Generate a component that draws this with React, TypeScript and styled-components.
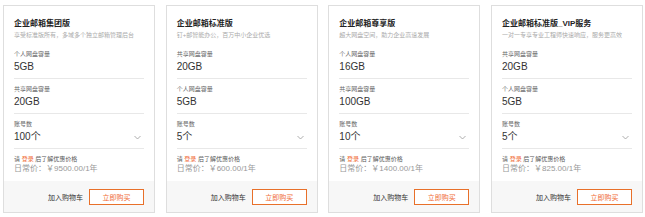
import styled, { createGlobalStyle } from "styled-components";

const GlobalStyle = createGlobalStyle`
  body {
    margin: 0;
    background: #fff;
    font-family: "Liberation Sans", "Noto Sans CJK SC", sans-serif;
  }
`;

type Spec = { label: string; value: string };

type Plan = {
  title: string;
  desc: string;
  specs: Spec[];
  accounts: string;
  price: string;
};

const plans: Plan[] = [
  {
    title: "企业邮箱集团版",
    desc: "享受标准版所有，多域多个独立邮箱管理后台",
    specs: [
      { label: "个人网盘容量", value: "5GB" },
      { label: "共享网盘容量", value: "20GB" },
    ],
    accounts: "100个",
    price: "9500.00",
  },
  {
    title: "企业邮箱标准版",
    desc: "钉+邮智能办公，百万中小企业优选",
    specs: [
      { label: "共享网盘容量", value: "20GB" },
      { label: "个人网盘容量", value: "5GB" },
    ],
    accounts: "5个",
    price: "600.00",
  },
  {
    title: "企业邮箱尊享版",
    desc: "超大网盘空间，助力企业高速发展",
    specs: [
      { label: "个人网盘容量", value: "16GB" },
      { label: "共享网盘容量", value: "100GB" },
    ],
    accounts: "10个",
    price: "1400.00",
  },
  {
    title: "企业邮箱标准版_VIP服务",
    desc: "一对一专享专业工程师快速响应，服务更高效",
    specs: [
      { label: "共享网盘容量", value: "20GB" },
      { label: "个人网盘容量", value: "5GB" },
    ],
    accounts: "5个",
    price: "825.00",
  },
];

const App = () => {
  return (
    <>
      <GlobalStyle />
      <StGrid>
        {plans.map((plan) => (
          <StCard key={plan.title}>
            <StBody>
              <StTitle>{plan.title}</StTitle>
              <StDesc>{plan.desc}</StDesc>
              {plan.specs.map((spec) => (
                <StSection key={spec.label}>
                  <StLabel>{spec.label}</StLabel>
                  <StValue>{spec.value}</StValue>
                </StSection>
              ))}
              <StSection>
                <StLabel>账号数</StLabel>
                <StSelectRow>
                  <StValue>{plan.accounts}</StValue>
                  <svg width="7" height="5" viewBox="0 0 7 5">
                    <path d="M0.5 1 L3.5 4 L6.5 1" fill="none" stroke="#999" strokeWidth="0.8" />
                  </svg>
                </StSelectRow>
              </StSection>
              <StPriceBlock>
                <StHint>
                  请 <StLink>登录</StLink> 后了解优惠价格
                </StHint>
                <StPrice>日常价：￥{plan.price}/1年</StPrice>
              </StPriceBlock>
            </StBody>
            <StFooter>
              <StCart>加入购物车</StCart>
              <StBuy>立即购买</StBuy>
            </StFooter>
          </StCard>
        ))}
      </StGrid>
    </>
  );
};

export default App;

const StGrid = styled.div`
  display: grid;
  grid-template-columns: repeat(4, 1fr);
  column-gap: 10.67px;
  width: 640px;
  padding: 5px 0 0 3px;
`;

const StCard = styled.div`
  display: flex;
  flex-direction: column;
  height: 208px;
  box-sizing: border-box;
  border: 1px solid #dedede;
  background: #fff;
`;

const StBody = styled.div`
  flex: 1;
  padding: 12px 10px 0 10px;
`;

const StTitle = styled.div`
  font-size: 8px;
  line-height: 12px;
  font-weight: bold;
  color: #222;
  white-space: nowrap;
`;

const StDesc = styled.div`
  font-size: 6px;
  line-height: 10px;
  color: #aaa;
  white-space: nowrap;
  margin-bottom: 4px;
`;

const StSection = styled.div`
  padding: 5px 0 3px;
  border-bottom: 1px solid #e8e8e8;
`;

const StLabel = styled.div`
  font-size: 6px;
  line-height: 10px;
  color: #666;
`;

const StValue = styled.div`
  font-size: 10px;
  line-height: 16px;
  color: #333;
`;

const StSelectRow = styled.div`
  display: flex;
  align-items: center;
  justify-content: space-between;
  padding-right: 3px;
`;

const StPriceBlock = styled.div`
  padding-top: 5px;
`;

const StHint = styled.div`
  font-size: 6px;
  line-height: 10px;
  color: #555;
`;

const StLink = styled.span`
  color: #f06a35;
`;

const StPrice = styled.div`
  font-size: 8px;
  line-height: 10px;
  color: #999;
`;

const StFooter = styled.div`
  display: flex;
  align-items: center;
  justify-content: flex-end;
  gap: 6px;
  height: 31px;
  padding-right: 10px;
  background: #f7f7f7;
`;

const StCart = styled.div`
  font-size: 7px;
  color: #333;
`;

const StBuy = styled.button`
  width: 55px;
  height: 16px;
  padding: 0;
  border: 1px solid #e8702a;
  background: #fff;
  color: #f06a35;
  font-family: inherit;
  font-size: 7px;
  cursor: pointer;
`;
